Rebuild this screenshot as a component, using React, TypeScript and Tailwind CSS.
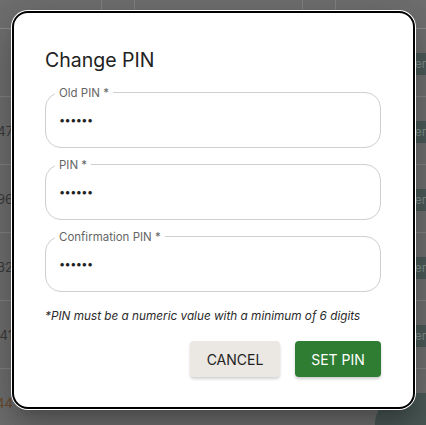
import { useState } from "react";

const rows = [
  { id: "", tone: "text-[#3a3a3a]" },
  { id: "4347", tone: "text-[#3a3a3a]" },
  { id: "2896", tone: "text-[#3a3a3a]" },
  { id: "6532", tone: "text-[#3a3a3a]" },
  { id: "7741", tone: "text-[#3a3a3a]" },
  { id: "1044", tone: "text-[#6a4b2c]" },
];

function PinField({ label }: { label: string }) {
  const [value, setValue] = useState("123456");
  return (
    <div className="relative h-[56px] rounded-2xl border border-[#cfcfcf] flex items-center px-[13px]">
      <span className="absolute -top-[8px] left-[9px] bg-white px-[4px] text-[11.5px] leading-4 text-[#666]">
        {label}
      </span>
      <input
        type="password"
        value={value}
        onChange={(e) => setValue(e.target.value)}
        className="w-full bg-transparent text-[11px] text-[#222] outline-none tracking-[-0.6px]"
      />
    </div>
  );
}

export default function App() {
  return (
    <div
      className="relative h-[425px] w-full overflow-hidden bg-[#6f6f6f]"
      style={{ fontFamily: "Inter, 'Noto Sans', sans-serif" }}
    >
      {/* dimmed table behind the dialog */}
      <div className="flex h-[29px] border-b border-[#8a8a8a]">
        <div className="w-[102px] border-r border-[#828282]" />
        <div className="w-[33px] border-r border-[#828282]" />
        <div className="w-[168px] border-r border-[#828282]" />
        <div className="w-[33px] border-r border-[#828282]" />
      </div>
      {rows.map((r, i) => (
        <div
          key={i}
          className="flex h-[68px] items-center border-b border-[#828282] pt-[2px]"
        >
          <div className="flex w-[13px] justify-end overflow-hidden">
            <span className={`text-[13px] ${r.tone}`}>{r.id}</span>
          </div>
          <div className="ml-auto flex h-[22px] w-[48px] items-center bg-[#4b5a58] pl-[1px] text-[12px] text-[#7f8f8d] whitespace-nowrap overflow-hidden">
            Member
          </div>
        </div>
      ))}
      <div className="absolute left-[375px] top-[401px] h-[44px] w-[90px] rounded-full bg-[#4a5856]" />

      {/* dialog */}
      <div className="absolute left-[12px] top-[11px] w-[403px] rounded-2xl border-2 border-black bg-white pl-[31px] pr-[32px] pt-[31px] pb-[30px] ring-1 ring-white shadow-[0_11px_15px_-7px_rgba(0,0,0,0.2),0_24px_38px_3px_rgba(0,0,0,0.14),0_9px_46px_8px_rgba(0,0,0,0.12)]">
        <h2 className="text-[19.5px] leading-8 text-[#222]">Change PIN</h2>
        <div className="mt-4 flex flex-col gap-4">
          <PinField label="Old PIN *" />
          <PinField label="PIN *" />
          <PinField label="Confirmation PIN *" />
        </div>
        <p className="mt-4 text-[11.75px] leading-4 italic text-[#2a2a2a]">
          *PIN must be a numeric value with a minimum of 6 digits
        </p>
        <div className="mt-[17px] flex justify-end gap-[15px]">
          <button className="h-9 w-[90px] rounded bg-[#ebe7e2] text-[14px] font-normal text-[#222] shadow-[0_2px_3px_rgba(0,0,0,0.18)]">
            CANCEL
          </button>
          <button className="h-9 w-[86px] rounded bg-[#2e7d32] text-[14px] font-normal text-white shadow-[0_2px_3px_rgba(0,0,0,0.2)]">
            SET PIN
          </button>
        </div>
      </div>
    </div>
  );
}
